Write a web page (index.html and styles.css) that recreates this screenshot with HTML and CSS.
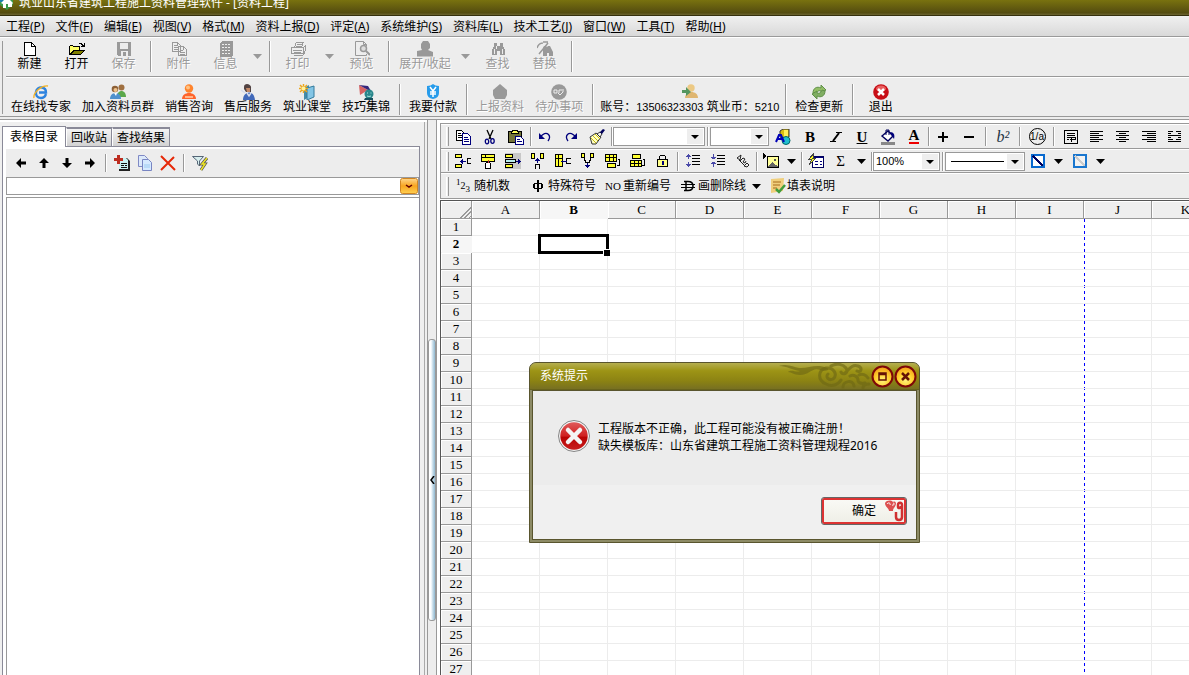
FILE: index.html
```html
<!DOCTYPE html>
<html lang="zh-CN">
<head>
<meta charset="utf-8">
<title>筑业山东省建筑工程施工资料管理软件 - [资料工程]</title>
<link rel="stylesheet" href="styles.css">
</head>
<body>
<div class="app">
  <header class="titlebar">
    <svg class="logo" width="14" height="14" viewBox="0 0 14 14"><path d="M0 0h13v9l-6 5-7-5z" fill="#3a9a4a"/><path d="M0 0h6v6H0z" fill="#1b7fae"/><path d="M1 7l6-6 6 6-1 1v3H8V8H6v4H3V8z" fill="#fff"/></svg>
    <span>筑业山东省建筑工程施工资料管理软件 - [资料工程]</span>
  </header>

  <nav class="menu">
    <a href="#">工程(<u>P</u>)</a><a href="#">文件(<u>F</u>)</a><a href="#">编辑(<u>E</u>)</a><a href="#">视图(<u>V</u>)</a><a href="#">格式(<u>M</u>)</a><a href="#">资料上报(<u>D</u>)</a><a href="#">评定(<u>A</u>)</a><a href="#">系统维护(<u>S</u>)</a><a href="#">资料库(<u>L</u>)</a><a href="#">技术工艺(<u>J</u>)</a><a href="#">窗口(<u>W</u>)</a><a href="#">工具(<u>T</u>)</a><a href="#">帮助(<u>H</u>)</a>
  </nav>

  <div class="bars">
    <div class="bar bar-file">
      <button class="tool std"><svg class="px" viewBox="0 0 16 16"><path d="M2.500 1.500h7l4 4v9h-11z" fill="#fff" stroke="#000"/><path d="M9.500 1.500v4h4" fill="none" stroke="#000"/></svg>新建</button>
      <button class="tool std"><svg class="px" viewBox="0 0 16 16"><path d="M0 14V5h1V4h3v1h7v4H5l-4 5z" fill="#000"/><path d="M1 12V5h3v1h6v3H4z" fill="#ff6"/><path d="M5 9h11l-4 5H1z" fill="#000"/><path d="M5 10h9l-3 3H3z" fill="#808000"/><path d="M9 3h1V2h3v1h1v1h1V2h1v4h-4V5h1V4h-1V3z" fill="#000"/></svg>打开</button>
      <button class="tool std" disabled><svg class="px" viewBox="0 0 16 16"><path d="M1 1h14v14H2l-1-1z" fill="#9a9a9a"/><path d="M4 2h8v6H4zM5 10h7v5h-2v-4H7v4H5z" fill="#ededed"/></svg>保存</button>
      <i class="sep"></i>
      <button class="tool std" disabled><svg class="px" viewBox="0 0 16 16"><path d="M1.500 1.500h5l3 3v6h-8zM7.500 5.500h5l3 3v6h-8z" fill="#eee" stroke="#999"/><path d="M3 4h3M3 6h4M3 8h4M9 9h3M9 11h5M9 13h5M6.500 2v3M12.500 6v3" stroke="#999"/></svg>附件</button>
      <button class="tool std" disabled><svg class="px" viewBox="0 0 16 16"><path d="M4 0h11v14l-2 2H2V2z" fill="#999"/><path d="M4 3.500h9M4 6.500h9M4 9.500h9M4 12.500h9" stroke="#eee" stroke-dasharray="2 1"/></svg>信息</button>
      <button class="drop" disabled aria-label="信息选项"><svg width="9" height="5" viewBox="0 0 9 5"><path d="M0 0h9L4.500 5z" fill="#999"/></svg></button>
      <i class="sep"></i>
      <button class="tool std" disabled><svg class="px" viewBox="0 0 16 16"><path d="M4.500 6l2-5h7l-2 5M1.500 6.500h12v6h-12zM13.500 6.500l2-2v5l-2 3M3.500 14.500h9l2-2" fill="#eee" stroke="#999"/><path d="M7 3h5M6 5h5M3 9h9M4 11h7" stroke="#999"/></svg>打印</button>
      <button class="drop" disabled aria-label="打印选项"><svg width="9" height="5" viewBox="0 0 9 5"><path d="M0 0h9L4.500 5z" fill="#999"/></svg></button>
      <button class="tool std" disabled><svg viewBox="0 0 16 16"><path d="M12.500 5V3.500l-3-3h-8v14h11V13M9.500.5v3h3" fill="none" stroke="#999"/><circle cx="9.500" cy="7.500" r="3" fill="#ddd" stroke="#999" stroke-width="1.500"/><path d="M12 10l4 4" stroke="#999" stroke-width="2"/></svg>预览</button>
      <i class="sep"></i>
      <button class="tool wide" disabled><svg viewBox="0 0 16 16"><path d="M4 3l2-3h5l2 3v4l-2 2 5 2v4.500H0V10l5-1-1-2z" fill="#999"/></svg>展开/收起</button>
      <button class="drop" disabled aria-label="展开选项"><svg width="9" height="5" viewBox="0 0 9 5"><path d="M0 0h9L4.500 5z" fill="#999"/></svg></button>
      <button class="tool std" disabled><svg class="px" viewBox="0 0 16 16"><path d="M4 2h3v3h3V2h3v3l2 4v5h-5v-4H7v4H2V9l2-4z" fill="#999"/><path d="M4 8v5M12 8v5M6 5v3" stroke="#eee"/></svg>查找</button>
      <button class="tool std" disabled><svg viewBox="0 0 16 16"><path d="M6 7l1-2h2l1 1 1-1h2l3 6v4h-4v-3h-2v3H6v-5z" fill="#999"/><path d="M0 7c1-3 3-5 6-5M2 13l9-11M6 1h5" fill="none" stroke="#999" stroke-width="1.500"/></svg>替换</button>
      <i class="sep"></i>
    </div>
    <div class="bar bar-service">
      <button class="tool"><svg viewBox="0 0 16 16"><path d="M13 10c-1 3-3 4-5 4-4 0-5.500-3-5-6 .5-3 3-5 6-4.500 3 .4 4 3 4 5H6" fill="none" stroke="#2d83df" stroke-width="2.400"/><path d="M1 14C0 9 8 1 15 2" fill="none" stroke="#f1b32b" stroke-width="1.400"/></svg>在线找专家</button>
      <button class="tool"><svg viewBox="0 0 16 16"><circle cx="11.500" cy="3.500" r="3" fill="#a07041"/><path d="M7 13c0-8 9-8 9 0z" fill="#5ba84b"/><circle cx="5" cy="5" r="3.300" fill="#8c6036"/><circle cx="5.500" cy="6" r="2" fill="#efc28b"/><path d="M0 15c0-8 11-8 11 0z" fill="#4f91cd"/><path d="M4 9l2 3 1-3z" fill="#fff"/></svg>加入资料员群</button>
      <button class="tool"><svg viewBox="0 0 16 16"><circle cx="8" cy="4.500" r="4.200" fill="#ff842d"/><circle cx="7" cy="3.500" r="2" fill="#ffc283"/><path d="M1 15c0-8 14-8 14 0z" fill="#ff642b"/><path d="M4 13h8" stroke="#ffd0a8" stroke-width="1.500"/></svg>销售咨询</button>
      <button class="tool"><svg viewBox="0 0 16 16"><path d="M4 5V3c0-5 8-3 7 1v4H6z" fill="#524343"/><path d="M6 4h4v4H7z" fill="#c58a68"/><path d="M3 16c0-9 11-11 12 0z" fill="#4169ba"/><path d="M7 9l2 3 2-3M1 6l4 3" fill="none" stroke="#d6dcec" stroke-width="1.500"/></svg>售后服务</button>
      <button class="tool"><svg viewBox="0 0 16 16"><path d="M5 4l5-3v12l-5 3z" fill="#418cab"/><path d="M8 4l7-2v11l-7 3z" fill="#83c5e5" stroke="#347b9c"/><path d="M4.500 0v9M0 4.500h9M1 1l7 7M8 1L1 8" stroke="#eda61d" stroke-width="1.500"/><circle cx="4.500" cy="4.500" r="2" fill="#fff39a"/></svg>筑业课堂</button>
      <button class="tool"><svg viewBox="0 0 16 16"><path d="M1 1l9 5-8 5z" fill="#d76363"/><path d="M1 1l9 1 3 5-3-1z" fill="#35277c"/><circle cx="11" cy="10" r="4.500" fill="#29868b"/><path d="M7 14h8v2H6z" fill="#174f5d"/><path d="M9 9h1M12.500 9h1M9 12q2 1 4 0" fill="none" stroke="#a8e5df"/></svg>技巧集锦</button>
      <i class="sep"></i>
      <button class="tool"><svg viewBox="0 0 16 16"><path d="M2 2q4 0 6-2 2 2 6 2v7q0 5-6 6-6-1-6-6z" fill="#279ceb"/><path d="M5 3l3 4 3-4M8 7v6M5 8h6M5 10h6" fill="none" stroke="#fff" stroke-width="1.500"/></svg>我要付款</button>
      <i class="sep"></i>
      <button class="tool" disabled><svg viewBox="0 0 16 16"><path d="M8 0l7 6v5l-2 4H3l-2-4V6z" fill="#999"/></svg>上报资料</button>
      <button class="tool" disabled><svg viewBox="0 0 16 16"><circle cx="8" cy="8" r="7.800" fill="#999"/><path d="M3 6v3h3V6zM8 9V6h3M12 5v3M7 9l2 2 3-3" fill="none" stroke="#eee"/></svg>待办事项</button>
      <i class="sep"></i>
      <button class="tool account"><svg viewBox="0 0 16 16"><circle cx="9" cy="4" r="3.700" fill="#ecc984"/><path d="M3 14c0-8 13-8 13 0z" fill="#dfb671"/><path d="M0 6h4V3l5 5-5 4v-3H0z" fill="#55965f"/></svg><span>账号：<b>13506323303</b> 筑业币：<b>5210</b></span></button>
      <i class="sep"></i>
      <button class="tool"><svg viewBox="0 0 16 16"><path d="M2 9c0-5 4-7 8-5V1l5 5-5 3V7C7 6 6 8 5 10z" fill="#93be66" stroke="#60904a"/><path d="M14 7c0 5-4 7-8 5v3l-5-5 5-3v2c3 1 4-1 5-3z" fill="#80ae62" stroke="#60904a"/></svg>检查更新</button>
      <i class="sep"></i>
      <button class="tool std"><svg viewBox="0 0 16 16"><circle cx="8" cy="8" r="7.800" fill="#c80e16"/><ellipse cx="8" cy="4.500" rx="5" ry="3" fill="#e96060"/><path d="M5 5l6 6M11 5l-6 6" stroke="#fff" stroke-width="2.500"/></svg>退出</button>
    </div>
  </div>

  <main class="work">
    <section class="side">
      <div class="tabs" role="tablist">
        <button class="tab on" role="tab">表格目录</button><button class="tab" role="tab">回收站</button><button class="tab" role="tab">查找结果</button>
      </div>
      <div class="side-body">
        <div class="side-tools">
          <button aria-label="左移"><svg viewBox="0 0 16 16"><path d="M3 8l5-5v3.500h5v3H8V13z"/></svg></button>
          <button aria-label="上移"><svg viewBox="0 0 16 16"><path d="M8 3l5 5H9.500v5h-3V8H3z"/></svg></button>
          <button aria-label="下移"><svg viewBox="0 0 16 16"><path d="M8 13l5-5H9.500V3h-3v5H3z"/></svg></button>
          <button aria-label="右移"><svg viewBox="0 0 16 16"><path d="M13 8L8 3v3.500H3v3h5V13z"/></svg></button>
          <i class="sep"></i>
          <button aria-label="添加表格"><svg viewBox="0 0 16 16"><path d="M5 3h8l3 3v10H5z" fill="#222"/><path d="M5 3h7l2 2v9H5z" fill="#c9f3f3"/><path d="M7 8.500h6M7 10.500h3M11 10.500h2M7 12.500h6" stroke="#111"/><path d="M0 3h3V0h3v3h3v3H6v3H3V6H0z" fill="#bd2e21"/></svg></button>
          <button aria-label="复制表格"><svg viewBox="0 0 16 16"><path d="M1.500.5h6l3 3v8h-9z" fill="#dce9fa" stroke="#7f89c5"/><path d="M5.500 4.500h6l3 3v8h-9z" fill="#d5e9ff" stroke="#7885c2"/><path d="M7 10h6M7 12h6" stroke="#9ccbf1"/></svg></button>
          <button aria-label="删除表格"><svg viewBox="0 0 16 16"><path d="M1 1l14 14M14 2L1 15" stroke="#e62808" stroke-width="2"/></svg></button>
          <i class="sep"></i>
          <button aria-label="筛选"><svg viewBox="0 0 16 16"><path d="M.5 1.500h11L7.500 6v5l-2-2V6z" fill="#d8eeee" stroke="#567"/><path d="M15 3l-5 6h3l-4 6" fill="none" stroke="#555" stroke-width="3"/><path d="M15 3l-5 6h3l-4 6" fill="none" stroke="#eee526" stroke-width="1.500"/></svg></button>
        </div>
        <select class="finder" aria-label="表格筛选"><option></option></select>
        <div class="list"></div>
      </div>
    </section>

    <div class="splitter"><button class="thumb" aria-label="折叠侧栏"><svg width="5" height="8" viewBox="0 0 5 8"><path d="M4 0L1 4l3 4" fill="none" stroke="#000" stroke-width="1.500"/></svg></button></div>

    <section class="editor">
      <div class="fmt">
        <div class="row row-a">
          <i class="grip"></i>
          <button aria-label="复制"><svg class="px" viewBox="0 0 16 16"><path d="M.5 1.500h5l3 3v7h-8z" fill="#fff" stroke="#000"/><path d="M6.500 4.500h5l3 3v8h-8z" fill="#fff" stroke="#00007c"/><path d="M2 4.500h3M2 6.500h4M2 8.500h4" stroke="#000"/><path d="M8 8.500h4M8 10.500h5M8 12.500h5" stroke="#00007c"/></svg></button>
          <button aria-label="剪切"><svg viewBox="0 0 16 16"><path d="M5 1l4 9M11 1L7 10" fill="none" stroke="#000" stroke-width="1.300"/><ellipse cx="5" cy="12.500" rx="1.700" ry="2.300" fill="none" stroke="#00007c" stroke-width="1.300"/><ellipse cx="10.500" cy="12" rx="1.700" ry="2.300" fill="none" stroke="#00007c" stroke-width="1.300"/></svg></button>
          <button aria-label="粘贴"><svg class="px" viewBox="0 0 16 16"><path d="M.5 2.500h13v11H.5z" fill="#74743a" stroke="#000"/><path d="M3.500 2.500h1v-1h5v1h1v2h-7z" fill="#ffff5a" stroke="#000"/><path d="M7.500 7.500h5l3 3v5h-8z" fill="#fff" stroke="#00007c"/><path d="M9 10.500h3M9 12.500h5" stroke="#00007c"/></svg></button>
          <i class="sep"></i>
          <button aria-label="撤销"><svg viewBox="0 0 16 16"><path d="M4 7l2-1.500c4-3 9 1 5 6.500" fill="none" stroke="#00007c" stroke-width="1.300"/><path d="M2 4v6h6z" fill="#00007c"/></svg></button>
          <button aria-label="重做"><svg viewBox="0 0 16 16"><path d="M12 7l-2-1.500C6 2.500 1 6.500 5 12" fill="none" stroke="#00007c" stroke-width="1.300"/><path d="M14 4v6H8z" fill="#00007c"/></svg></button>
          <button aria-label="格式刷"><svg viewBox="0 0 16 16"><path d="M1 8l6-4 5 4-5 7H3z" fill="#ffffc0" stroke="#333"/><path d="M2 9l5 5M4 7l5 5M6 5l5 5" stroke="#c5b810"/><path d="M8 5l3-2 2 2-2 3z" fill="#eee" stroke="#333"/><path d="M11 3l3-3 2 1-3 4z" fill="#00005c"/></svg></button>
          <i class="sep"></i>
          <select class="combo font" aria-label="字体"><option></option></select>
          <i class="sep mid"></i>
          <select class="combo size" aria-label="字号"><option></option></select>
          <button class="art" aria-label="艺术字"><svg viewBox="0 0 16 16"><path d="M5 2l3-2h6v8l-5 2-4-2z" fill="#d8bd12" stroke="#333"/><path d="M9 1h4v7H9z" fill="#ffef56"/><circle cx="11" cy="11.500" r="4" fill="#20bfd0" stroke="#066"/><path d="M1 13l3-7h2l3 7M3 10h4" fill="none" stroke="#0000b8" stroke-width="2"/></svg></button>
          <button class="glyph"><b>B</b></button>
          <button aria-label="斜体"><svg viewBox="0 0 16 16"><path d="M8 3.500h6M2 12.500h6" stroke="#000"/><path d="M11 4l-6 8" stroke="#000" stroke-width="2"/></svg></button>
          <button class="glyph"><b><u>U</u></b></button>
          <button aria-label="填充"><svg viewBox="0 0 16 16"><path d="M2 7l6-5 5 5-5 5z" fill="#fff" stroke="#00005c" stroke-width="1.400"/><path d="M6 6V1h3v5" fill="none" stroke="#00005c"/><path d="M10 3c4 0 5 3 4 7l-2-3z" fill="#00007c"/><path d="M1 13h14v3H1z" fill="#888"/></svg></button>
          <button class="glyph red"><b>A</b></button>
          <i class="sep"></i>
          <button aria-label="增加"><svg class="px" viewBox="0 0 16 16"><path d="M3 7h10v2H3zM7 3h2v10H7z"/></svg></button>
          <button aria-label="减少"><svg class="px" viewBox="0 0 16 16"><path d="M3 7h10v2H3z"/></svg></button>
          <i class="sep broad"></i>
          <button class="glyph power"><i>b²</i></button>
          <i class="sep broad"></i>
          <button class="glyph circled"><span>1/a</span></button>
          <i class="sep broad"></i>
          <button aria-label="自动换行"><svg class="px" viewBox="0 0 16 16"><path d="M1.500 1.500h13v13h-13zM4 4.500h8M4 6.500h8M4 8.500h8v2H7M4 10.500h2M8.500 9v4" fill="none" stroke="#000"/></svg></button>
          <button aria-label="左对齐"><svg class="px" viewBox="0 0 16 16"><path d="M1 2.500h13M1 4.500h9M1 6.500h13M1 8.500h9M1 10.500h13M1 12.500h9" stroke="#000"/></svg></button>
          <button aria-label="居中"><svg class="px" viewBox="0 0 16 16"><path d="M1 2.500h13M4 4.500h7M1 6.500h13M4 8.500h7M1 10.500h13M4 12.500h7" stroke="#000"/></svg></button>
          <button aria-label="右对齐"><svg class="px" viewBox="0 0 16 16"><path d="M1 2.500h14M6 4.500h9M1 6.500h14M6 8.500h9M1 10.500h14M6 12.500h9" stroke="#000"/></svg></button>
          <button aria-label="分散对齐"><svg class="px" viewBox="0 0 16 16"><path d="M1 2.500h5M9 2.500h5M1 4.500h3M11 4.500h3M1 6.500h13M1 8.500h3M11 8.500h3M1 10.500h5M9 10.500h5M1 12.500h13" stroke="#000"/></svg></button>
        </div>
        <div class="row row-b">
          <i class="grip"></i>
          <button aria-label="插入行"><svg class="px" viewBox="0 0 16 16"><path d="M.5 1.500h6v3h-6zM.5 11.500h6v3h-6z" fill="#ff3" stroke="#000"/><path d="M16 5.500h-4v5h4" fill="none" stroke="#000"/><path d="M5 8.500h6M7.500 6v5M6.500 7v3" stroke="#00007c"/></svg></button>
          <button aria-label="插入单元格"><svg class="px" viewBox="0 0 16 16"><path d="M1.500 1.500h13v7h-13z" fill="#ff3" stroke="#000"/><path d="M1 4.500h13M5.500 1v4" fill="none" stroke="#000"/><path d="M5.500 15.500v-5l1-1h3l1 1v5z" fill="#fff" stroke="#000"/><path d="M8 7v3" stroke="#c33"/></svg></button>
          <button class="pressed" aria-label="删除行"><svg class="px" viewBox="0 0 16 16"><path d="M.5 1.500h7v3h-7zM.5 11.500h7v3h-7z" fill="#ff3" stroke="#000"/><path d="M.5 6.500h10v3H.5z" fill="#b9eeee" stroke="#000"/><path d="M11 8.500h5M13.500 6v5M14.500 7v3" stroke="#00007c"/></svg></button>
          <button aria-label="插入列"><svg class="px" viewBox="0 0 16 16"><path d="M1.500.5h3v5h-3zM10.500.5h3v5h-3z" fill="#ff3" stroke="#000"/><path d="M5.500 16v-4.500h4V16" fill="none" stroke="#000"/><path d="M7.500 5v5M5 7.500h5M6 6.500h3" stroke="#00007c"/></svg></button>
          <button aria-label="左插列"><svg class="px" viewBox="0 0 16 16"><path d="M.5 1.500h7v12h-7z" fill="#ff3" stroke="#000"/><path d="M0 5.500h7M3.500 1v12M16 5.500h-5v5h5" fill="none" stroke="#000"/><path d="M6 8.500h6" stroke="#00007c"/></svg></button>
          <button aria-label="删除列"><svg class="px" viewBox="0 0 16 16"><path d="M1.500.5h3v4h-3zM10.500.5h3v4h-3z" fill="#ff3" stroke="#000"/><path d="M4.500 5v2.500h1v2h4v-2h1V5" fill="none" stroke="#000"/><path d="M7.500 10v5M5 12.500h5M6 13.500h3" stroke="#00007c"/></svg></button>
          <button aria-label="合并行"><svg class="px" viewBox="0 0 16 16"><path d="M.5 1.500h11v7H.5zM2.500 10.500h8v4h-8z" fill="#ff3" stroke="#000"/><path d="M0 4.500h11M4.500 1v7M8.500 1v7M13 6.500h1.500v6H12" fill="none" stroke="#000"/></svg></button>
          <button aria-label="拆分行"><svg class="px" viewBox="0 0 16 16"><path d="M2.500 1.500h8v4h-8zM.5 7.500h11v6H.5z" fill="#ff3" stroke="#000"/><path d="M0 10.500h11M4.500 7v6M8.500 7v6M13 6.500h1.500v6H12" fill="none" stroke="#000"/></svg></button>
          <button aria-label="锁定"><svg class="px" viewBox="0 0 16 16"><path d="M4.500 7V3.500l1-1h4l1 1V7" fill="none" stroke="#000"/><path d="M2.500 6.500h10v7h-10z" fill="#ff8" stroke="#000"/><path d="M7 8h2v4H7z" fill="#00007c"/></svg></button>
          <i class="sep"></i>
          <button aria-label="增加行距"><svg class="px" viewBox="0 0 16 16"><path d="M7 2.500h8M7 5.500h8M7 8.500h8M7 11.500h8" stroke="#000"/><path d="M3.500 1v5M1 3.500h5M3.500 9v5M1 11.500h5M2 2.500h3M2 12.500h3" stroke="#4848a8"/></svg></button>
          <button aria-label="减小行距"><svg class="px" viewBox="0 0 16 16"><path d="M7 2.500h8M7 5.500h8M7 8.500h8M7 11.500h8" stroke="#000"/><path d="M3.500 1v5M1 4.500h5M3.500 9v5M1 10.500h5M2 5.500h3M2 9.500h3" stroke="#4848a8"/></svg></button>
          <button aria-label="文字方向"><svg viewBox="0 0 16 16"><path d="M2 5l4-3-1 5zM5 8l3-3 2 1-2 3 2 1 1-2M9 13l3-3 2 2-2 2zM4 7l7 7" fill="none" stroke="#222" stroke-width="1"/></svg></button>
          <i class="sep narrow"></i>
          <button aria-label="插入图片"><svg class="px" viewBox="0 0 16 16"><path d="M4.500 3.500h11v11h-11z" fill="#ff9" stroke="#000"/><path d="M5 14l4-5 3 3 1-1 2 3z" fill="#666"/><circle cx="12" cy="7" r="1.500" fill="#555"/><path d="M0 0l4 3-4 3z"/></svg></button>
          <button class="drop" aria-label="图片选项"><svg width="9" height="5" viewBox="0 0 9 5"><path d="M0 0h9L4.500 5z"/></svg></button>
          <i class="sep narrow"></i>
          <button aria-label="函数"><svg class="px" viewBox="0 0 16 16"><path d="M4.500 3.500h11v11h-11z" fill="#fff" stroke="#00005c"/><path d="M5 4.500h10" stroke="#00007c"/><path d="M7 8.500h3M12 8.500h2M7 11.500h3M12 11.500h2" stroke="#00007c"/><path d="M6 0L1 6h3l-3 6 7-7H5z" fill="#ff2" stroke="#444"/></svg></button>
          <button class="glyph">Σ</button>
          <button class="drop" aria-label="求和选项"><svg width="9" height="5" viewBox="0 0 9 5"><path d="M0 0h9L4.500 5z"/></svg></button>
          <i class="sep narrow"></i>
          <select class="combo zoom" aria-label="缩放"><option>100%</option></select>
          <i class="sep"></i>
          <select class="combo line" aria-label="线型"><option></option></select>
          <button aria-label="斜线"><svg class="px" viewBox="0 0 16 16"><path d="M2 2h12v12H2z" fill="#fff" stroke="#0869cf" stroke-width="2"/><path d="M3 3l10 10" stroke="#00005c" stroke-width="2"/></svg></button>
          <button class="drop" aria-label="斜线选项"><svg width="9" height="5" viewBox="0 0 9 5"><path d="M0 0h9L4.500 5z"/></svg></button>
          <button aria-label="边框"><svg class="px" viewBox="0 0 16 16"><path d="M2 2h12v12H2z" fill="#f2f2f2" stroke="#1976cf" stroke-width="2"/><path d="M3 3l10 10" stroke="#ccc" stroke-width="2"/></svg></button>
          <button class="drop" aria-label="边框选项"><svg width="9" height="5" viewBox="0 0 9 5"><path d="M0 0h9L4.500 5z"/></svg></button>
        </div>
        <div class="row row-c">
          <i class="grip"></i>
          <button class="named"><span class="digits"><sup>1</sup>2<sub>3</sub></span>随机数</button>
          <button class="named"><svg class="px" viewBox="0 0 16 16"><path d="M7 2h2v12H7zM4 5h8v1H4zM4 10h8v1H4zM3 6h2v4H3zM11 6h2v4h-2z"/></svg>特殊符号</button>
          <button class="named"><span class="no">NO</span>重新编号</button>
          <button class="named"><svg viewBox="0 0 16 16"><path d="M4 3.500h4q5 0 5 4.500t-5 4.500H4M6 3v10" fill="none" stroke="#000" stroke-width="1.500"/><path d="M1 6.500h14M1 9.500h14" stroke="#000"/></svg>画删除线</button>
          <button class="drop" aria-label="删除线选项"><svg width="9" height="5" viewBox="0 0 9 5"><path d="M0 0h9L4.500 5z"/></svg></button>
          <button class="named note"><svg viewBox="0 0 16 16"><path d="M1 1l13-1-1 13-12 2z" fill="#f0cf7c"/><path d="M3 4h8M3 7h7M3 10h4" stroke="#a56a1d"/><path d="M6 11l3 3 6-7" fill="none" stroke="#3f9c3c" stroke-width="2.500"/></svg>填表说明</button>
        </div>
      </div>
      <div class="sheet"><table id="grid"><thead></thead><tbody></tbody></table></div>
    </section>
  </main>

  <section class="dialog" role="alertdialog" aria-labelledby="dlg-title">
    <div class="dlg-head">
      <h2 id="dlg-title">系统提示</h2>
      <svg class="cloud" width="92" height="26" viewBox="0 0 92 26"><g fill="#6e6814" opacity=".65"><path d="M0 3c9-3 14 1 20 2 9 1 17-5 28 0 4 2-2 4-7 2-8-3-10 5-20 5-7 0-8-3-12-3 4-3 8 1 12-1C13 7 8 3 0 3z"/></g><g fill="none" stroke="#6e6814" stroke-width="3" stroke-linecap="round" opacity=".65"><path d="M62 17c-3 5-9 7-15 4-9-4-8-14 0-16 8-1 12 7 7 11-4 2-8-2-5-5M52 3c5-3 12-2 15 2 3 5-3 8-5 4M66 10c4-3 6-9 13-7 5 2 3 7-1 5M64 24c0-6 10-8 11-1M71 13c4-2 8 1 8 4s4 4 7 3M80 12c3-2 7 0 9 3M84 25c0-3 3-4 6-4"/></g></svg>
      <button aria-label="最大化"><svg viewBox="0 0 23 23"><circle cx="11.500" cy="11.500" r="10" fill="url(#gold)" stroke="#7e0707" stroke-width="2"/><path d="M8 8h7v7H8zM8 9.500h7" fill="none" stroke="#651205" stroke-width="1.500"/></svg></button>
      <button aria-label="关闭"><svg viewBox="0 0 23 23"><defs><radialGradient id="gold" cx=".5" cy=".7" r=".6"><stop stop-color="#fff27a"/><stop offset=".6" stop-color="#ffd02e"/><stop offset="1" stop-color="#f5a81d"/></radialGradient></defs><circle cx="11.500" cy="11.500" r="10" fill="url(#gold)" stroke="#7e0707" stroke-width="2"/><path d="M8 8l7 7M15 8l-7 7" stroke="#651205" stroke-width="2.500"/></svg></button>
    </div>
    <div class="dlg-body">
      <div class="message">
        <svg width="32" height="32" viewBox="0 0 32 32"><defs><linearGradient id="err" x2="0" y2="1"><stop stop-color="#e05a5a"/><stop offset=".5" stop-color="#cf2020"/><stop offset=".55" stop-color="#b80404"/><stop offset="1" stop-color="#c81d1d"/></linearGradient></defs><circle cx="16" cy="16" r="15.500" fill="#f4f4f4" stroke="#858585"/><circle cx="16" cy="16" r="13.700" fill="url(#err)"/><path d="M10 10l12 12M22 10L10 22" stroke="#f4f4f4" stroke-width="4.500" stroke-linecap="round"/></svg>
        <p>工程版本不正确，此工程可能没有被正确注册！<br>缺失模板库：山东省建筑工程施工资料管理规程2016</p>
      </div>
      <div class="actions">
        <button class="ok">确定<svg width="20" height="22" viewBox="0 0 20 22"><path d="M0 3c2-3 6-3 8-1 2-1 3 0 3 2-1 4-3 4-3 7H4C4 8 0 7 0 3z" fill="#dd5050"/><path d="M2 4c1-2 4-1 3 1M8 3c2 0 1 3-1 2" fill="none" stroke="#fff"/><path d="M11 12v5c0 4 6 4 6 0V5c0-3-4-3-4 0v2c0 2 3 1 3-1" fill="none" stroke="#d03030" stroke-width="2.500"/></svg></button>
      </div>
    </div>
  </section>
</div>
<script src="grid.js"></script>
</body>
</html>
```
FILE: grid.js
```js
const columns = 'ABCDEFGHIJK'.split('');
const active = { column: 'B', row: 2 };
const grid = document.getElementById('grid');

const cell = (tag, text, className) => {
  const el = document.createElement(tag);
  el.textContent = text;
  if (className) el.className = className;
  return el;
};

const head = document.createElement('tr');
head.append(cell('th', '', 'corner'));
columns.forEach(c => head.append(cell('th', c, c === active.column ? 'current' : '')));
grid.tHead.append(head);

for (let r = 1; r <= 27; r++) {
  const tr = document.createElement('tr');
  tr.append(cell('th', r, r === active.row ? 'current' : ''));
  columns.forEach(c => tr.append(cell('td', '', c === active.column && r === active.row ? 'selected' : '')));
  grid.tBodies[0].append(tr);
}
```
FILE: styles.css
```css
* { box-sizing: border-box; }

body {
  margin: 0;
  font: 12px/14px "Noto Sans", "Noto Sans CJK SC", sans-serif;
  color: #000;
  background: #ededed;
}

button {
  display: flex;
  align-items: center;
  justify-content: center;
  flex: none;
  margin: 0;
  padding: 0;
  border: 0;
  background: none;
  color: inherit;
  font: inherit;
  white-space: nowrap;
}

svg { display: block; flex: none; }
.px { shape-rendering: crispEdges; }

.app {
  position: relative;
  display: flex;
  flex-direction: column;
  height: 100vh;
  overflow: hidden;
}

/* title and menu */
.titlebar {
  display: flex;
  align-items: flex-end;
  flex: none;
  gap: 5px;
  height: 16px;
  padding-bottom: 5px;
  overflow: hidden;
  border-bottom: 1px solid #35300c;
  background: linear-gradient(#79720f, #544c10 85%, #6b6432);
  color: #fff;
  font-size: 12px;
  white-space: nowrap;
}

.menu {
  display: flex;
  flex: none;
  gap: 11px;
  height: 21px;
  padding: 4px 6px 0;
  border-bottom: 1px solid #9a9a9a;
  background: linear-gradient(#f0f0f0, #d9d9d9);
}

.menu a { color: #000; text-decoration: none; white-space: nowrap; }

/* main toolbars */
.bars {
  flex: none;
  padding: 0 0 0 6px;
  border-top: 1px solid #fff;
  border-bottom: 1px solid #999;
  background: linear-gradient(#999, #999) 2px 3px / 1px 73px no-repeat, #ededed;
}

.bar { display: flex; font-family: "Liberation Sans", "Noto Sans CJK SC", sans-serif; }
.bar-file { height: 39px; padding-top: 3px; border-bottom: 1px solid #999; }
.bar-service { height: 39px; padding-top: 6px; border-top: 1px solid #fff; }

.tool {
  flex-direction: column;
  justify-content: flex-start;
  padding: 0 6px 0 5px;
}

.tool svg { width: 16px; height: 16px; }
.tool.std { width: 47px; padding: 0; }
.tool.wide { width: 64px; padding: 0; }
.tool.account { padding: 0 3px; }
.account b { font-size: 11px; font-weight: normal; }
.tool:disabled { color: #999; text-shadow: 1px 1px #fff; }
.bar .drop { width: 17px; height: 30px; }

.sep {
  flex: none;
  width: 8px;
  background: linear-gradient(90deg, #999 1px, #fff 1px) center / 2px 100% no-repeat;
}

.bar .sep { height: 31px; }

/* work area */
.work { display: flex; flex: 1; min-height: 0; margin-top: 2px; border-top: 1px solid #999; }

.side {
  display: flex;
  flex-direction: column;
  flex: none;
  width: 427px;
  padding: 4px 7px 0 2px;
  border-top: 2px solid #fff;
  background: linear-gradient(#aaa, #aaa) 424px 0 / 1px 100% no-repeat, #efefef;
}

.tabs { display: flex; align-items: flex-end; height: 21px; margin-bottom: -1px; }

.tab {
  height: 20px;
  padding: 0 4px;
  border: 1px solid #8a8a98;
  border-left-color: #fff;
  border-top-width: 2px;
  background: linear-gradient(#f4f4f4, #d2d2d2);
}

.tab.on {
  z-index: 1;
  height: 21px;
  padding: 0 7px;
  border-top-width: 1px;
  border-left-color: #8a8a98;
  border-bottom: 0;
  background: #fff;
}

.side-body {
  display: flex;
  flex-direction: column;
  flex: 1;
  padding: 2px 0 0 3px;
  border: 1px solid #8a8a98;
  border-bottom: 0;
  background: #fff;
}

.side-tools { display: flex; align-items: center; gap: 7px; height: 28px; padding: 0 7px; background: #ededed; }
.side-tools svg { width: 16px; height: 16px; }
.side-tools .sep { width: 2px; height: 18px; }

.finder {
  height: 18px;
  margin: 0;
  border: 1px solid #999;
  appearance: none;
  background:
    url("data:image/svg+xml,%3Csvg xmlns='http://www.w3.org/2000/svg' width='18' height='16'%3E%3Cdefs%3E%3ClinearGradient id='g' x2='0' y2='1'%3E%3Cstop stop-color='%23ffd68c'/%3E%3Cstop offset='.5' stop-color='%23f8a51f'/%3E%3Cstop offset='1' stop-color='%23ffd052'/%3E%3C/linearGradient%3E%3C/defs%3E%3Crect x='.5' y='.5' width='17' height='15' rx='2' fill='url(%23g)' stroke='%23d18622'/%3E%3Cpath d='M6 7l3 2 3-2' fill='none' stroke='%23600' stroke-width='1.500'/%3E%3C/svg%3E") right center no-repeat, #fff;
}

.list { flex: 1; margin-top: 2px; border: 1px solid #999; border-width: 1px 0 0 1px; }

.splitter {
  flex: none;
  width: 10px;
  padding-top: 219px;
  border: 1px solid #999;
  border-width: 0 1px;
}

.thumb {
  width: 8px;
  height: 282px;
  border: 1px solid #999;
  border-radius: 3px;
  background: linear-gradient(90deg, #fff 2px, #dceaf2 3px, #8fb8d0 6px);
}

.editor {
  display: flex;
  flex-direction: column;
  flex: 1;
  min-width: 0;
  padding: 3px 0 0 3px;
  background: #fff;
}

/* formatting toolbars */
.fmt { flex: none; border: 1px solid #999; border-right: 0; background: #ededed; font-family: "Liberation Sans", "Noto Sans CJK SC", sans-serif; }

.row {
  display: flex;
  align-items: center;
  height: 25px;
  border-top: 1px solid #fff;
  border-bottom: 1px solid #999;
  overflow: hidden;
}

.row-b { height: 24px; }
.row-c { border-bottom: 0; height: 25px; }
.row svg:not([width]) { width: 16px; height: 16px; }
.row-a button { width: 26px; }
.row-b button { width: 25px; }
.pressed svg { background: #c8c8c8; }
.grip { flex: none; width: 10px; height: 19px; background: linear-gradient(90deg, #fff 1px, #ededed 1px 2px, #999 2px) 5px 0 / 3px 100% no-repeat; }
.row-b .grip { width: 9px; }
.row .sep { width: 3px; height: 19px; }
.row .sep.mid, .row-b .sep { width: 5px; }
.row .sep.broad { width: 8px; }
.row .sep.narrow { width: 3px; }
.row .drop { width: 17px; }

.combo {
  flex: none;
  height: 19px;
  margin: 0;
  padding: 0 2px;
  border: 1px solid #999;
  border-radius: 0;
  appearance: none;
  font: 11px/14px "Liberation Sans", sans-serif;
  color: #000;
  background:
    url("data:image/svg+xml,%3Csvg xmlns='http://www.w3.org/2000/svg' width='16' height='15'%3E%3Cpath fill='%23eee' d='M0 0h16v15H0z'/%3E%3Cpath d='M4 6h8l-4 4z'/%3E%3C/svg%3E") right 1px center no-repeat, #fff;
}

.font { width: 92px; }
.size { width: 59px; }
.zoom { width: 67px; }

.line {
  width: 80px;
  background-image:
    linear-gradient(#000, #000),
    url("data:image/svg+xml,%3Csvg xmlns='http://www.w3.org/2000/svg' width='16' height='15'%3E%3Cpath fill='%23eee' d='M0 0h16v15H0z'/%3E%3Cpath d='M4 6h8l-4 4z'/%3E%3C/svg%3E");
  background-position: 5px center, right 1px center;
  background-size: 53px 1px, 16px 15px;
  background-repeat: no-repeat;
}

.row-a .art { width: 28px; }
.glyph { font: 15px/16px "Liberation Serif", serif; }
.red b { border-bottom: 2px solid #e00; line-height: 13px; }
.power { color: #234; font-size: 16px; }
.circled span { width: 17px; height: 17px; border: 1px solid #000; border-radius: 50%; font: 10px/15px "Liberation Sans", sans-serif; }

.row-c { padding-right: 8px; }
.named { gap: 2px; margin-left: 5px; }
.named + .named { margin-left: 20px; }
.named + .named + .named { margin-left: 9px; }
.digits { width: 16px; font: 10px/14px "Liberation Serif", serif; text-align: left; }
.digits sup, .digits sub { font-size: 9px; line-height: 0; }
.no { font: 11px/16px "Liberation Serif", serif; }
.row-c .drop { width: 22px; }
.named.note { margin-left: 2px; gap: 1px; }

/* spreadsheet */
.sheet { flex: 1; min-height: 0; margin-top: 1px; overflow: hidden; border: 1px solid #555; border-width: 1px 0 0 1px; }

#grid {
  width: 779px;
  table-layout: fixed;
  border-collapse: separate;
  border-spacing: 0;
  background: repeating-linear-gradient(#00f 0 3px, #fff 3px 6px) 643px 0 / 1px 100% no-repeat;
}

#grid th, #grid td { height: 17px; padding: 0; border: 1px solid #ececec; border-width: 0 1px 1px 0; }
#grid td:nth-child(10) { border-right-color: transparent; }

#grid th {
  border-color: #999;
  background: #efefef;
  box-shadow: inset 1px 1px #fff;
  font: 13px/16px "Liberation Serif", serif;
  text-align: center;
}

#grid thead th { height: 18px; line-height: 17px; }
#grid th.current { border-color: #f6f6f6; background: #f6f6f6; font-weight: bold; }

#grid th.corner {
  width: 31px;
  background:
    linear-gradient(135deg, #efefef 50%, transparent 50%) right bottom / 12px 12px no-repeat,
    repeating-linear-gradient(135deg, #999 0 1px, #efefef 1px 3px) right bottom / 12px 12px no-repeat,
    #efefef;
}

.selected { position: relative; }
.selected::before { content: ""; position: absolute; inset: -2px; border: 3px solid #000; }
.selected::after { content: ""; position: absolute; right: -3px; bottom: -4px; width: 6px; height: 6px; border: 1px solid #fff; border-width: 1px 0 0 1px; background: #000; }

/* message dialog */
.dialog {
  position: absolute;
  left: 529px;
  top: 362px;
  width: 391px;
  border: 1px solid #59552e;
  border-radius: 7px 7px 0 0;
  background: #8d8b66;
}

.dlg-head {
  display: flex;
  align-items: center;
  height: 27px;
  padding: 0 2px 0 10px;
  border-bottom: 1px solid #68631b;
  border-radius: 6px 6px 0 0;
  background: linear-gradient(#b5af50, #9d9415 30%, #8b8213 70%, #777022);
  color: #fff;
}

.dlg-head h2 { flex: 1; margin: 0; font-size: 12px; font-weight: normal; }
.dlg-head button, .dlg-head button svg { width: 23px; height: 23px; }

.dlg-body { margin: 0 2px 2px; border: 1px solid #59552e; background: #f0f0f0; }
.message { display: flex; gap: 8px; padding: 29px 25px 31px; background: #ececec; }
.message p { margin: 0; line-height: 17px; white-space: nowrap; }
.actions { display: flex; justify-content: flex-end; padding: 12px 9px 14px; }

.ok {
  position: relative;
  width: 86px;
  height: 28px;
  border: 1px solid #666;
  border-radius: 3px;
  background: linear-gradient(#fafaf6, #eeeee6);
  box-shadow: inset 0 0 0 2px #d33;
}

.ok svg { position: absolute; right: 1px; top: 2px; }
```
